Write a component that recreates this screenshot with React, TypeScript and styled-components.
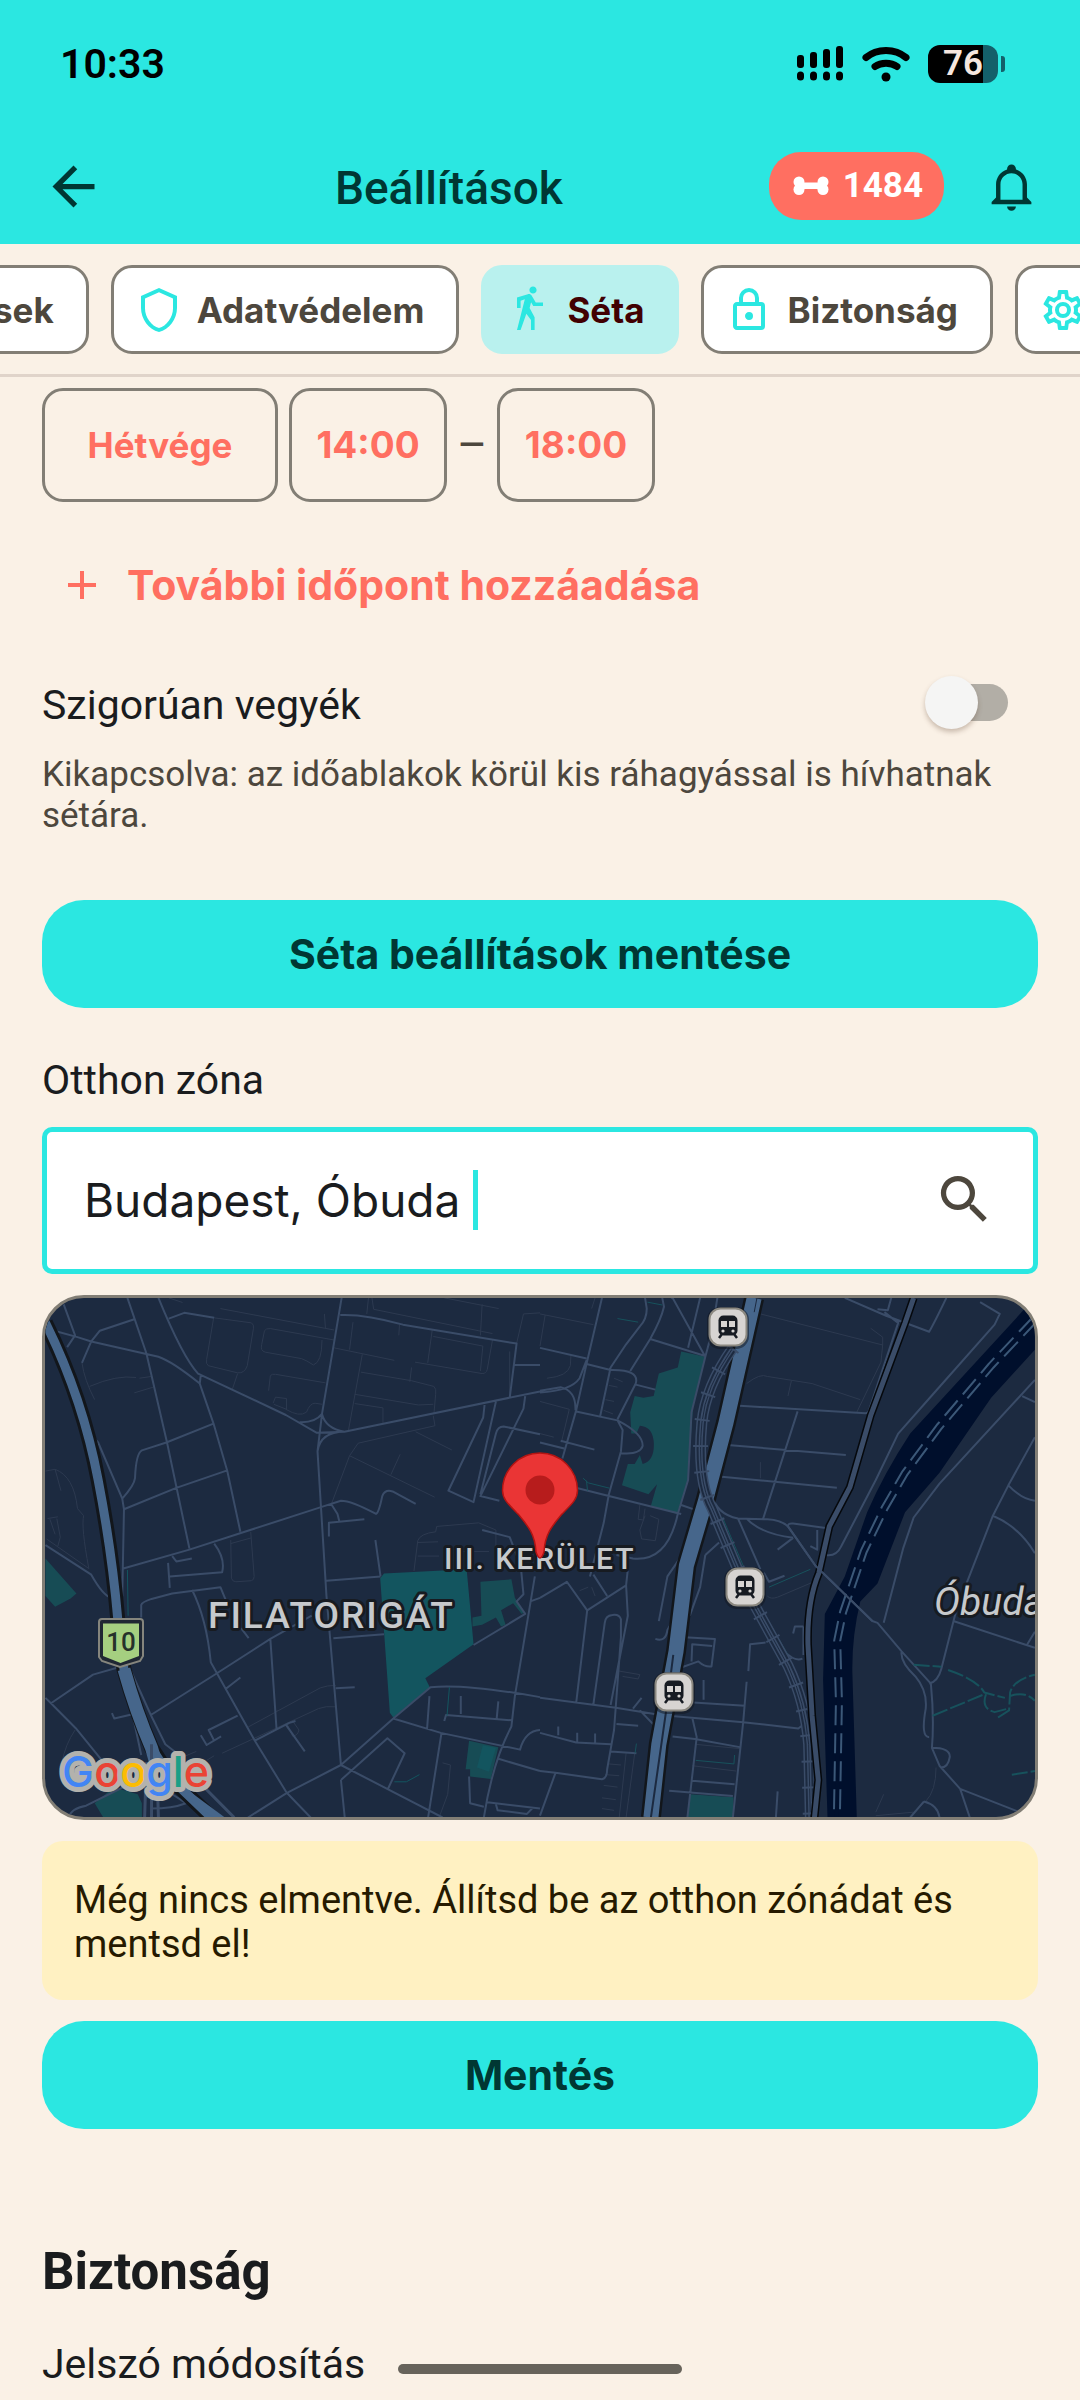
import React, { useLayoutEffect, useRef, useState } from "react";
import styled, { createGlobalStyle } from "styled-components";
import { MdAdd, MdArrowBack, MdSearch } from "react-icons/md";

const color = {
  aqua: "#2be7e1",
  aquaSoft: "#b9f1ee",
  aquaInk: "#003733",
  cream: "#faf1e6",
  coral: "#ff6f61",
  outline: "#827e75",
  ink: "#1a1c1e",
  muted: "#4d473d",
  line: "#e0d4ca",
};

const brand = `Inter, "Liberation Sans", sans-serif`;
const body = `Roboto, "Liberation Sans", sans-serif`;

const GlobalStyle = createGlobalStyle`
  *, *::before, *::after { box-sizing: border-box; }
  body { margin: 0; background: ${color.cream}; font-family: ${body}; color: ${color.ink}; }
  button, input { font: inherit; color: inherit; }
  h1, h2, p { margin: 0; }
  svg { display: block; flex: none; }
`;

const Screen = styled.div`
  display: flex;
  flex-direction: column;
  min-height: 100vh;
  overflow: hidden;
`;

const Header = styled.header`
  background: ${color.aqua};
`;

const StatusBar = styled.div`
  display: flex;
  align-items: center;
  justify-content: space-between;
  height: 128px;
  padding: 0 75px 0 60px;
  color: #000;
`;

const Clock = styled.time`
  font: 600 41px/48px ${body};
`;

const StatusIcons = styled.div`
  display: flex;
  align-items: center;
  gap: 18px;
`;

const Battery = styled.div`
  display: flex;
  align-items: center;
  gap: 3px;
`;

const BatteryCell = styled.div`
  width: 70px;
  height: 38px;
  border-radius: 12px;
  background: linear-gradient(to right, #000 79%, #14606a 79%);
  color: #f6e7df;
  font: 600 35px/38px ${body};
  text-align: center;
`;

const BatteryTip = styled.div`
  width: 4px;
  height: 16px;
  border-radius: 0 3px 3px 0;
  background: #14606a;
`;

const AppBar = styled.div`
  display: flex;
  align-items: center;
  height: 116px;
  padding: 0 42px;
  color: ${color.aquaInk};
`;

const IconButton = styled.button`
  display: grid;
  place-items: center;
  padding: 0;
  border: 0;
  background: none;
  cursor: pointer;
`;

const BackButton = styled(IconButton)`
  margin-right: 24px;
`;

const BellButton = styled(IconButton)`
  margin-left: 41px;
`;

const Title = styled.h1`
  flex: 1;
  padding-top: 4px;
  font: 500 46px/52px ${body};
  text-align: center;
`;

const Points = styled.button`
  display: flex;
  align-items: center;
  gap: 14px;
  height: 68px;
  padding: 0 21px 0 24px;
  border: 0;
  border-radius: 32px;
  background: ${color.coral};
  color: #fff;
  font: 700 35px/40px ${body};
`;

const Tabs = styled.nav`
  display: flex;
  gap: 22px;
  padding: 21px 42px 20px;
  overflow: hidden;
  border-bottom: 3px solid ${color.line};
`;

const Chip = styled.button<{ $active?: boolean }>`
  display: flex;
  flex: none;
  align-items: center;
  gap: 14px;
  height: 89px;
  padding: 0 32px 0 21px;
  border: 3px solid ${(p) => (p.$active ? color.aquaSoft : color.outline)};
  border-radius: 21px;
  background: ${(p) => (p.$active ? color.aquaSoft : "#fff")};
  color: ${(p) => (p.$active ? "#410002" : color.muted)};
  font: 700 35px/40px ${brand};
  cursor: pointer;
  svg { color: ${color.aqua}; }
`;

const Content = styled.main`
  display: flex;
  flex-direction: column;
  padding: 11px 42px 12px;
`;

const SlotRow = styled.div`
  display: flex;
  align-items: center;
`;

const SlotButton = styled.button<{ $wide?: boolean }>`
  width: ${(p) => (p.$wide ? 236 : 158)}px;
  height: 114px;
  margin-right: ${(p) => (p.$wide ? 11 : 0)}px;
  padding: 0;
  border: 3px solid ${color.outline};
  border-radius: 21px;
  background: none;
  color: ${color.coral};
  font: 700 ${(p) => (p.$wide ? 35 : 37)}px/44px ${brand};
`;

const Dash = styled.span`
  width: 50px;
  color: ${color.muted};
  font: 400 46px/44px ${body};
  text-align: center;
`;

const AddSlot = styled.button`
  display: flex;
  align-items: center;
  align-self: flex-start;
  gap: 21px;
  height: 64px;
  margin: 51px 0 59px;
  padding: 0 16px;
  border: 0;
  background: none;
  color: ${color.coral};
  font: 700 41px/46px ${brand};
`;

const SwitchRow = styled.label`
  display: flex;
  align-items: flex-end;
  justify-content: space-between;
  height: 53px;
  margin-bottom: 25px;
  padding-right: 30px;
  font: 400 41px/47px ${body};
`;

const Switch = styled.input`
  appearance: none;
  display: flex;
  align-items: center;
  width: 83px;
  height: 53px;
  margin: 0;

  &::before {
    content: "";
    z-index: 1;
    flex: none;
    width: 53px;
    height: 53px;
    border-radius: 50%;
    background: #f5f5f4;
    box-shadow: 0 3px 5px rgba(90, 60, 40, 0.3);
  }
  &::after {
    content: "";
    flex: none;
    width: 77px;
    height: 37px;
    margin-left: -47px;
    border-radius: 19px;
    background: #b2aea6;
  }
  &:checked::before { margin-left: 30px; }
  &:checked::after { margin-left: -77px; background: ${color.aqua}; }
`;

const Hint = styled.p`
  margin-bottom: 64px;
  color: ${color.muted};
  font: 400 35px/41px ${body};
`;

const PrimaryButton = styled.button`
  height: 108px;
  border: 0;
  border-radius: 42px;
  background: ${color.aqua};
  color: ${color.aquaInk};
  font: 700 41px/46px ${brand};
  cursor: pointer;
`;

const FieldLabel = styled.label`
  margin: 49px 0 23px;
  font: 400 41px/47px ${body};
`;

const SearchField = styled.div`
  display: flex;
  align-items: center;
  height: 147px;
  padding: 0 37px 2px;
  border: 5px solid ${color.aqua};
  border-radius: 10px;
  background: #fff;
`;

const SearchInput = styled.input`
  field-sizing: content;
  min-width: 20px;
  padding: 0;
  border: 0;
  outline: 0;
  background: none;
  white-space: pre;
  font: 400 46px/52px ${brand};
`;

const Caret = styled.span`
  width: 5px;
  height: 60px;
  margin-right: auto;
  background: ${color.aqua};
`;

const SearchButton = styled(IconButton)`
  color: ${color.muted};
`;

const MapCard = styled.div`
  height: 525px;
  margin: 21px 0;
  overflow: hidden;
  border: 3px solid ${color.outline};
  border-radius: 42px;
  background: #1c2a40;
  svg { width: 100%; height: 100%; }
`;

const Notice = styled.p`
  margin-bottom: 21px;
  padding: 37px 32px 34px;
  border-radius: 21px;
  background: #fff1c2;
  color: #261a00;
  font: 400 38px/44px ${body};
`;

const SectionTitle = styled.h2`
  margin: 114px 0 40px;
  font: 700 51px/58px ${body};
`;

const SettingName = styled.p`
  font: 400 41px/47px ${body};
`;

const HomeIndicator = styled.div`
  position: fixed;
  bottom: 26px;
  left: 50%;
  width: 284px;
  height: 10px;
  margin-left: -142px;
  border-radius: 5px;
  background: #67635b;
`;

const glyphs = {
  shield:
    "M21,11C21,16.5 17.16,21.74 12,23C6.84,21.74 3,16.5 3,11V5L12,1L21,5V11M12,21C15.75,20 19,15.54 19,11.22V6.3L12,3.18L5,6.3V11.22C5,15.54 8.25,20 12,21Z",
  walk:
    "M14.12,10H19V8.2H15.38L13.38,4.87C13.08,4.37 12.54,4.03 11.92,4.03C11.74,4.03 11.58,4.06 11.42,4.11L6,5.8V11H7.8V7.33L9.91,6.67L6,22H7.8L10.67,13.89L13,17V22H14.8V15.59L12.31,11.05L13.04,8.18M14,3.8C15,3.8 15.8,3 15.8,2C15.8,1 15,0.2 14,0.2C13,0.2 12.2,1 12.2,2C12.2,3 13,3.8 14,3.8Z",
  lock:
    "M12,17C10.89,17 10,16.1 10,15C10,13.89 10.89,13 12,13A2,2 0 0,1 14,15A2,2 0 0,1 12,17M18,20V10H6V20H18M18,8A2,2 0 0,1 20,10V20A2,2 0 0,1 18,22H6C4.89,22 4,21.1 4,20V10C4,8.89 4.89,8 6,8H7V6A5,5 0 0,1 12,1A5,5 0 0,1 17,6V8H18M12,3A3,3 0 0,0 9,6V8H15V6A3,3 0 0,0 12,3Z",
  cog:
    "M12,8A4,4 0 0,1 16,12A4,4 0 0,1 12,16A4,4 0 0,1 8,12A4,4 0 0,1 12,8M12,10A2,2 0 0,0 10,12A2,2 0 0,0 12,14A2,2 0 0,0 14,12A2,2 0 0,0 12,10M10,22C9.75,22 9.54,21.82 9.5,21.58L9.13,18.93C8.5,18.68 7.96,18.34 7.44,17.94L4.95,18.95C4.73,19.03 4.46,18.95 4.34,18.73L2.34,15.27C2.21,15.05 2.27,14.78 2.46,14.63L4.57,12.97L4.5,12L4.57,11L2.46,9.37C2.27,9.22 2.21,8.95 2.34,8.73L4.34,5.27C4.46,5.05 4.73,4.96 4.95,5.05L7.44,6.05C7.96,5.66 8.5,5.32 9.13,5.07L9.5,2.42C9.54,2.18 9.75,2 10,2H14C14.25,2 14.46,2.18 14.5,2.42L14.87,5.07C15.5,5.32 16.04,5.66 16.56,6.05L19.05,5.05C19.27,4.96 19.54,5.05 19.66,5.27L21.66,8.73C21.79,8.95 21.73,9.22 21.54,9.37L19.43,11L19.5,12L19.43,13L21.54,14.63C21.73,14.78 21.79,15.05 21.66,15.27L19.66,18.73C19.54,18.95 19.27,19.04 19.05,18.95L16.56,17.95C16.04,18.34 15.5,18.68 14.87,18.93L14.5,21.58C14.46,21.82 14.25,22 14,22H10M11.25,4L10.88,6.61C9.68,6.86 8.62,7.5 7.85,8.39L5.44,7.35L4.69,8.65L6.8,10.2C6.4,11.37 6.4,12.64 6.8,13.8L4.68,15.36L5.43,16.66L7.86,15.62C8.63,16.5 9.68,17.14 10.87,17.38L11.24,20H12.76L13.13,17.39C14.32,17.14 15.37,16.5 16.14,15.62L18.57,16.66L19.32,15.36L17.2,13.81C17.6,12.64 17.6,11.37 17.2,10.2L19.31,8.65L18.56,7.35L16.15,8.39C15.38,7.5 14.32,6.86 13.12,6.62L12.75,4H11.25Z",
  bell:
    "M10 21H14C14 22.1 13.1 23 12 23S10 22.1 10 21M21 19V20H3V19L5 17V11C5 7.9 7.03 5.17 10 4.29C10 4.19 10 4.1 10 4C10 2.9 10.9 2 12 2S14 2.9 14 4C14 4.1 14 4.19 14 4.29C16.97 5.17 19 7.9 19 11V17L21 19M17 11C17 8.24 14.76 6 12 6S7 8.24 7 11V18H17V11Z",
};

const Glyph = ({ name, size = 48 }: { name: keyof typeof glyphs; size?: number }) => (
  <svg width={size} height={size} viewBox="0 0 24 24" fill="currentColor" aria-hidden="true">
    <path d={glyphs[name]} />
  </svg>
);

const BoneIcon = () => (
  <svg width="36" height="20" viewBox="0 0 36 20" fill="currentColor" aria-hidden="true">
    <circle cx="6" cy="6" r="5.5" />
    <circle cx="6" cy="13.5" r="5.5" />
    <circle cx="30" cy="6" r="5.5" />
    <circle cx="30" cy="13.5" r="5.5" />
    <rect x="5" y="6.500" width="26" height="6.500" />
  </svg>
);

const SignalIcon = () => (
  <svg width="47" height="36" viewBox="0 0 47 36" aria-hidden="true">
    {[9, 6, 3, 0].map((top, i) => (
      <g key={top}>
        <rect x={i * 13} y={top} width="7" height={22 - top} rx="3" />
        <rect x={i * 13} y="25.500" width="7" height="9" rx="3.500" />
      </g>
    ))}
  </svg>
);

const WifiIcon = () => (
  <svg width="48" height="36" viewBox="0 0 48 36" fill="none" stroke="#000" strokeLinecap="round" aria-hidden="true">
    <path d="M4 11.500C15 2 33 2 44 11.500" strokeWidth="7" />
    <path d="M13 20.500C19 16 29 16 35 20.500" strokeWidth="7" />
    <circle cx="24" cy="31" r="4.500" fill="#000" stroke="none" />
  </svg>
);

const westStreets = `
M370 50L425 205L485 455L550 752M460 50Q530 215 575 262L830 378L920 428L1000 425L1568 312
M160 143L225 160L265 172L460 215Q500 228 580 290L620 402L660 535L698 705M580 290L583 266
M992 50L935 375L922 480L948 885L990 1358M935 375Q915 400 870 398M935 375Q945 415 1000 425M922 480Q930 425 1000 425
M358 808L550 755L932 636L990 618Q1020 618 1092 655Q1100 652 1110 605Q1118 585 1140 592L1207 627
M483 455L620 402M360 642L512 582L660 533M268 437L285 455L355 612L360 642L355 885L322 888Q300 885 265 825L132 742
M355 612Q390 575 392 555Q395 485 412 477L483 455M988 98Q1060 95 1170 125L1500 178L1480 330
M490 108L535 92L622 106M238 232L265 172L290 142L390 110M185 68L218 155L195 188
M148 1185L270 1105L350 1083M132 1170L148 1185L220 1255L300 1350M438 1218L622 1106L785 1005L905 940
M410 945L410 910Q412 902 440 893L500 878L640 860L655 895M558 868Q600 950 612 1070L740 1290L832 1435L902 1505
M720 1505L832 1437L990 1358L1142 1228L1250 1140Q1350 1130 1568 1168M990 1358L1285 1505M990 1400L1125 1283L1175 1325L1125 1428M990 1400L1001 1505
M1142 1228L1280 1268L1510 1315Q1525 1262 1568 1260M1282 1268L1243 1505M785 1005L803 1258M740 1290L840 1240L858 1235M948 842L1105 830M968 1003L1115 992
M1553 830L1495 1165L1485 1250Q1430 1350 1405 1505M1290 1235L1295 1218L1487 1233M1338 1165L1338 1215M1447 1180L1442 1230M1247 1165L1240 1258
M1568 890L1540 900M1375 1022L1525 935L1500 900L1520 880L1512 800L1480 720L1400 700
M1407 350L1403 385L1302 590L1375 622L1440 340M1525 325L1520 360L1395 605L1450 618M1568 432L1462 410Q1445 410 1440 430L1395 600
M1490 238L1568 238M1445 1340L1568 1375M1415 1462L1568 1480M1405 1475L1365 1465L1362 1390M1440 1468L1445 1485L1530 1495L1545 1480
M488 792L493 862M493 830L645 818Q655 780 622 738M500 773L512 788L557 780M955 718L955 680L1058 670M962 628L980 655L985 675
M325 1213L332 1228L385 1216L410 1330M378 1090L438 1218L480 1300L520 1330M380 1095L400 1180L430 1300M1090 728L1105 830M200 1505Q205 1480 250 1472L400 1400M975 1143L1030 1140
M655 1145L698 1113M583 1275L600 1302L642 1278M622 1290L606 1260L690 1220M830 1245L885 1320M700 975L722 1003M440 1480Q500 1480 540 1465L500 1440`;

const westLanes = `
M640 80L970 140M1065 95L1070 50M1080 50L1085 82L1430 150M1395 155L1400 68M1290 50L1448 80M622 106L730 120Q738 125 736 135L718 240Q710 262 690 260L605 240Q597 235 600 222L620 108M690 262L675 305
M935 168Q935 230 910 238Q890 225 875 220L770 202Q755 198 760 180L768 142Q772 135 785 136L970 168M970 190L1145 225M1025 118L1015 195
M780 310L785 268Q790 262 800 264L945 288M793 345L800 328L832 332L832 362L795 348M830 362Q870 385 890 370Q900 345 915 345L935 348M1052 208L1012 420M1048 258L1195 282L1260 298Q1268 305 1265 320L1260 375M1195 245L1190 285
M1030 320L1215 350L1258 348M1030 346L1112 358L1112 400M1205 230L1400 262Q1412 262 1415 250L1430 168M1255 140L1242 232M1395 255L1402 185L1258 158M1160 125L1158 155
M1258 380L1263 408L1040 457L1015 492L962 628M1207 425L1312 476M1015 492L1262 608M1162 488L1135 545M1480 200L1480 330M1500 178L1520 95L1568 92
M260 298Q340 265 395 273M405 275L440 270M238 232Q245 280 275 335M390 316L445 300M132 535L160 530Q215 550 225 640L243 660Q235 690 258 808L135 725M160 530L177 590M138 668L168 663M145 670L160 712M165 668L175 720L168 745
M670 728L672 835Q675 845 685 845L730 842Q738 840 738 830L728 705M670 738L730 722M490 50L530 63M942 95L945 135M1202 815L1213 730Q1220 710 1265 705L1268 690L1390 680L1440 700M1213 735L1272 733M1213 773L1275 773
M720 1252L930 1142Q950 1135 975 1135M806 1205L800 1210M645 1325L925 1200Q945 1192 975 1195M836 1248L850 1278Q865 1275 868 1260L850 1235M1285 1352L1308 1358L1300 1440L1275 1505M520 1340L570 1320M600 1345L622 1332M218 1260Q190 1300 180 1350M1440 790L1440 700M1340 760L1420 760`;

const eastStreets = `
M180 50L135 235L105 365L65 500M305 50L310 80Q310 110 290 130L250 180L205 245L175 380M355 50L360 75Q352 110 320 165L262 255M480 213L320 165M465 50L430 190
M0 310L60 300Q105 310 103 365M0 315Q90 310 115 275L135 225M0 190L135 220M105 368L225 393L240 420L235 480L200 600L185 680L145 830M0 455L70 472M135 235L205 252Q290 250 278 290L225 390
M225 393Q300 430 298 465Q290 490 235 485M110 583L200 605L410 655M278 293L335 307M385 50L480 215L440 370L430 560L400 655Q370 790 270 780L222 770M480 215Q500 150 515 50M385 50L380 50
M580 352L945 373Q955 372 957 360L1040 120L1000 90M748 368L648 668M545 462L888 490M520 550L862 582M545 440L500 600Q510 655 575 668L660 670Q700 672 720 690M720 690Q720 680 735 682L835 695
M720 690L800 800L965 955L980 960L1050 1040L1135 1130Q1145 1230 1138 1310L1160 1360L1220 1425L1385 1487M1050 1040Q1045 1070 1090 1110Q1125 1150 1120 1200Q1105 1280 1130 1280
M885 50L1005 100L1130 145Q1145 120 1180 50M980 82L1010 85L1020 50M1278 62L1335 95L1320 125L1150 310L1040 430L975 560L875 745Q860 775 830 770M1437 280L1160 570L1085 665L1055 750L998 960
M1400 325L1437 342M1437 440L1360 575L1315 660L1210 920L1165 1090Q1155 1125 1130 1130M1360 575Q1400 615 1437 618M1315 660Q1390 690 1437 765M1200 955L1437 1030M1415 1020L1437 985
M0 1170L220 1198L350 1218L590 1238L750 1256L765 1245M0 1268L105 1295L205 1300M600 1125L590 1238L560 1505M442 1225L455 1280L428 1505M0 1375L45 1380L180 1398Q195 1395 195 1370L215 1260L235 1000L235 950Q230 935 210 938Q190 940 188 960L155 1188M105 1185L137 925L78 845L0 890M137 925L250 855L255 940L205 1190
M250 855L255 810M155 825L195 885M480 770L520 735M345 955L370 830L420 760M480 770L465 860L435 940M335 1005Q365 1015 370 980L420 895M605 1095L610 1020L655 1015M420 1000L508 1005L498 1082Q480 1085 460 1068L410 1085M440 1068L442 1020L500 1025M445 1183L595 1192M385 1278L450 1285L580 1308M442 1402L565 1412M375 1430L560 1445M60 450L158 475M222 1243L285 1248M0 1500L45 1380M270 1200L295 1170M290 1205L340 1255M475 1120L475 1175M690 1432L685 1505
M1138 1310Q1190 1310 1190 1335Q1185 1365 1165 1365M1220 1425L1248 1505M1115 1460L1075 1505M1115 1460Q1155 1470 1160 1505M600 668Q640 710 735 722M735 722L690 755M575 668L640 810M650 820L665 845L710 828M765 970L740 970L735 990M805 700L805 755L785 745M765 1050L765 970M710 1040Q740 1070 762 1060M205 1320L280 1325M53 1250L53 1275M108 1268L108 1295M160 1270L160 1295M570 190L590 230M410 630L455 645`;

const eastLanes = `
M0 95L155 125M15 98L0 185M90 210L88 240Q80 270 20 275M0 340L85 362L62 455M640 95L995 182L990 230L920 370M600 290Q640 260 660 270L790 290L930 335M730 282L720 325M960 135L995 160L995 182M215 275L240 285M200 295L225 300M190 335L215 340M185 365L212 375
M290 630L285 670L300 672L305 640M320 660L345 670L335 730L295 725L290 700L305 660M640 510L640 555M230 1095L290 1105L285 1117L240 1110M200 1355L235 1358M190 1385L230 1388M185 1415L225 1420M180 1450L220 1455M180 1480L215 1485M250 1325L230 1505M275 1325L250 1505
M450 1300L580 1312M442 1360L570 1375M1150 1365Q1150 1430 1120 1460L1085 1490L975 1500M998 1440L975 1490M660 885Q670 895 690 888L795 845M115 870L140 860M150 860L160 885M150 80L160 50M0 430L40 440`;

const Station = ({ x, y }: { x: number; y: number }) => (
  <g transform={`translate(${x} ${y})`}>
    <rect x="-21" y="-20" width="42" height="42" rx="13" fill="#11161d" opacity=".5" />
    <rect x="-18.500" y="-18.500" width="37" height="37" rx="11" fill="#d7d4d2" stroke="#8b8880" strokeWidth="2" />
    <rect x="-9.500" y="-11.500" width="19" height="20" rx="5" fill="#171b22" />
    <path d="M-7 -6h6v6h-6zM1 -6h6v6h-6z" fill="#d7d4d2" />
    <circle cx="-5" cy="4" r="1.600" fill="#d7d4d2" />
    <circle cx="5" cy="4" r="1.600" fill="#d7d4d2" />
    <path d="M-6 7L-9 11M6 7L9 11" stroke="#171b22" strokeWidth="2.500" />
  </g>
);

const MapLabel = styled.text<{ $size: number; $italic?: boolean }>`
  font: ${(p) => (p.$italic ? "italic 400" : "500")} ${(p) => p.$size}px ${body};
  letter-spacing: ${(p) => (p.$italic ? 0 : 2)}px;
  fill: #c6c9cc;
  stroke: #171b21;
  stroke-width: 6px;
  stroke-linejoin: round;
  paint-order: stroke;
`;

const LogoText = styled.text`
  font: 500 43px ${brand};
`;

const logoLetters: [string, string][] = [
  ["G", "#4285f4"],
  ["o", "#ea4335"],
  ["o", "#fbbc05"],
  ["g", "#4285f4"],
  ["l", "#1a9e86"],
  ["e", "#ea4335"],
];

const west = "translate(0 1280) scale(.34439 .35714)";
const east = "translate(540 1280) scale(.34439 .35714)";
const rail = "M560 190Q480 300 470 400Q455 560 500 640L600 870L720 1080Q770 1180 780 1300L785 1505";
const expressway = "M622 50L540 400L480 620L425 800L395 1040L345 1300L322 1505";
const mainRoad = "M1085 50L1060 120L960 380L900 580L840 690L810 820Q775 900 778 1020L790 1220L808 1400L797 1505";
const ferry = "M1437 110L1310 240L1160 410L1060 540L1000 640L940 760L880 930L863 1010L868 1180L862 1505";
const motorway = "M132 120Q240 330 285 560Q325 760 342 950L360 1090Q395 1210 440 1310L500 1400L630 1520";

const ZoneMap = () => (
  <svg viewBox="45 1298 990 519" preserveAspectRatio="xMidYMid slice" role="img" aria-label="Otthon zóna térképe">
    <style>{`.map-lines path { vector-effect: non-scaling-stroke; fill: none; stroke-linejoin: round; }`}</style>
    <g transform={west}>
      <path fill="#13555f" d="M1115 822L1355 810L1375 1020L1235 1115L1248 1140L1142 1225L1132 1212L1104 835Z" />
      <path fill="#174c55" d="M1395 845L1485 838L1495 890L1522 930L1515 935L1490 905L1455 925L1468 965L1455 970L1440 945L1400 965L1372 970L1372 945L1398 940ZM132 780L222 878L205 892L160 915L132 885ZM1362 1290L1447 1308L1425 1397L1365 1390L1365 1370L1352 1370ZM275 1465L330 1420L400 1440L412 1465L412 1505L300 1505Z" />
      <path fill="#13555f" d="M1402 1303L1440 1310L1420 1377L1385 1365Z" />
    </g>
    <g transform={east}>
      <path fill="#174c55" d="M410 200L480 215L445 345L435 480L430 560L398 655L322 632L340 572L315 600L238 575L255 515L275 515L290 490L298 515Q335 505 330 450Q325 410 290 408L280 430L265 430L262 370L275 325L300 330L330 325L345 262L400 245ZM435 1440L562 1448L560 1505L428 1505Z" />
      <path fill="#000f2c" d="M1410 78L1437 100L1437 195L1310 330L1160 540L1060 650L980 850L930 900Q905 1000 907 1100L920 1510L835 1510L822 1120L827 935L885 830L950 650Q1000 540 1075 430Z" />
    </g>
    <g className="map-lines">
      <g transform={west} stroke="#3a4c68">
        <path d={westLanes} stroke="#2d3a50" strokeWidth="1" />
        <path d={westStreets} strokeWidth="2" />
        <path d={motorway} stroke="#12161b" strokeWidth="15" />
        <path d={motorway} stroke="#46668b" strokeWidth="9" />
        <path d="M360 1090Q395 1210 440 1310L455 1360" stroke="#46668b" strokeWidth="13" />
        <path d="M440 1300L440 1505M425 1350L420 1505M455 1350L460 1505M500 1330L680 1505" strokeWidth="3" />
        <path d="M545 1440L650 1515" stroke="#46668b" strokeWidth="7" />
        <path d="M370 812L372 940M1305 1140L1298 1220M1145 1405L1180 1405L1218 1385" stroke="#13555f" strokeWidth="1" />
      </g>
      <g transform={east} stroke="#3a4c68">
        <path d={eastLanes} stroke="#2d3a50" strokeWidth="1" />
        <path d={eastStreets} strokeWidth="2" />
        <path d="M225 108L285 118M312 62L355 70M125 555L140 568L202 583M135 562L138 590M530 665L590 800M665 860L785 810M640 915L720 1050M452 1345L563 1355L565 1330M280 1298L276 1325" stroke="#17525c" strokeWidth="1" />
        <path d="M1085 1077L1165 1083M1185 1092Q1270 1120 1290 1155L1350 1170M1140 1220L1290 1160M1295 1160Q1280 1200 1320 1210L1360 1200M1330 1225L1362 1205L1365 1155Q1375 1120 1437 1105M1365 1165Q1410 1150 1437 1178M1370 1385L1437 1375" stroke="#17525c" strokeWidth="2" strokeDasharray="16 3" />
        <path d={expressway} stroke="#12161b" strokeWidth="20" />
        <path d={expressway} stroke="#46668b" strokeWidth="15" />
        <path d="M387 1050L365 1215L322 1505" stroke="#1c2a40" strokeWidth="2" />
        <path d="M630 50L622 90" stroke="#1c2a40" strokeWidth="1" />
        <path d={rail} strokeWidth="11" />
        <path d={rail} stroke="#1c2a40" strokeWidth="8" />
        <path d={rail} strokeWidth="4" />
        <path d={rail} stroke="#1c2a40" strokeWidth="1" />
        <path d={rail} strokeWidth="15" strokeDasharray="2 24" />
        <path d={mainRoad} stroke="#05080c" strokeWidth="8" />
        <path d={mainRoad} strokeWidth="5" />
        <path d={ferry} stroke="#3b5878" strokeWidth="8" strokeDasharray="20 8" />
        <path d={ferry} stroke="#000f2c" strokeWidth="4" />
        <path d="M720 690L800 800L965 955" strokeWidth="2" />
      </g>
    </g>

    <Station x={728} y={1327} />
    <Station x={745} y={1587} />
    <Station x={674} y={1692} />

    <path d="M99 1622Q99 1619 102 1619H140Q143 1619 143 1622V1656L140 1661L120 1667L102 1661L99 1657Z" fill="#1f2733" stroke="#85857d" strokeWidth="2" />
    <path d="M103 1623.500H139V1656L120.500 1663L103 1656Z" fill="#a5cf80" />
    <text x="121" y="1651" textAnchor="middle" fill="#26312b" fontFamily="Roboto, sans-serif" fontSize="26" fontWeight="500">10</text>

    <MapLabel $size={37} x="208" y="1628">FILATORIGÁT</MapLabel>
    <MapLabel $size={30} x="444" y="1569">III. KERÜLET</MapLabel>
    <MapLabel $size={39} $italic x="934" y="1615">Óbuda</MapLabel>

    <path d="M536 1552C535 1534 528 1526 518 1514C508 1504 502.500 1499 502.500 1490.500A37.500 37.500 0 0 1 577.500 1490.500C577.500 1499 572 1504 562 1514C552 1526 545 1534 544 1552Q540 1564 536 1552Z" fill="#ea3535" stroke="#b31412" strokeWidth="1.500" />
    <circle cx="540" cy="1490" r="14.500" fill="#b71c1c" />

    <LogoText x="62" y="1787" stroke="#b3b2ad" strokeWidth="10" strokeLinejoin="round" paintOrder="stroke">
      {logoLetters.map(([letter, fill], i) => (
        <tspan key={i} fill={fill}>{letter}</tspan>
      ))}
    </LogoText>
  </svg>
);

const tabs: { label: string; icon?: keyof typeof glyphs }[] = [
  { label: "Értesítések" },
  { label: "Adatvédelem", icon: "shield" },
  { label: "Séta", icon: "walk" },
  { label: "Biztonság", icon: "lock" },
];

export default function App() {
  const [active, setActive] = useState("Séta");
  const [strict, setStrict] = useState(false);
  const [zone, setZone] = useState("Budapest, Óbuda ");
  const tabsRef = useRef<HTMLElement>(null);

  // Bring the open tab near the middle, leaving the earlier tab in view beside it.
  useLayoutEffect(() => {
    const bar = tabsRef.current;
    const chip = bar?.querySelector<HTMLElement>("[aria-current]");
    if (bar && chip) {
      bar.scrollLeft = chip.offsetLeft + chip.offsetWidth / 2 - bar.clientWidth / 2 - 40;
    }
  }, []);

  return (
    <Screen>
      <GlobalStyle />
      <Header>
        <StatusBar>
          <Clock>10:33</Clock>
          <StatusIcons>
            <SignalIcon />
            <WifiIcon />
            <Battery>
              <BatteryCell>76</BatteryCell>
              <BatteryTip />
            </Battery>
          </StatusIcons>
        </StatusBar>
        <AppBar>
          <BackButton aria-label="Vissza"><MdArrowBack size={63} /></BackButton>
          <Title>Beállítások</Title>
          <Points><BoneIcon />1484</Points>
          <BellButton aria-label="Értesítések megnyitása"><Glyph name="bell" size={53} /></BellButton>
        </AppBar>
      </Header>

      <Tabs ref={tabsRef}>
        {tabs.map(({ label, icon }) => (
          <Chip
            key={label}
            $active={label === active}
            aria-current={label === active ? "page" : undefined}
            onClick={() => setActive(label)}
          >
            {icon && <Glyph name={icon} />}
            {label}
          </Chip>
        ))}
        <Chip aria-label="Egyéb"><Glyph name="cog" /></Chip>
      </Tabs>

      <Content>
        <SlotRow>
          <SlotButton $wide>Hétvége</SlotButton>
          <SlotButton>14:00</SlotButton>
          <Dash>–</Dash>
          <SlotButton>18:00</SlotButton>
        </SlotRow>
        <AddSlot><MdAdd size={48} />További időpont hozzáadása</AddSlot>

        <SwitchRow>
          Szigorúan vegyék
          <Switch type="checkbox" role="switch" checked={strict} onChange={(e) => setStrict(e.target.checked)} />
        </SwitchRow>
        <Hint>Kikapcsolva: az időablakok körül kis ráhagyással is hívhatnak sétára.</Hint>
        <PrimaryButton>Séta beállítások mentése</PrimaryButton>

        <FieldLabel htmlFor="zone">Otthon zóna</FieldLabel>
        <SearchField>
          <SearchInput id="zone" value={zone} onChange={(e) => setZone(e.target.value)} />
          <Caret />
          <SearchButton aria-label="Keresés"><MdSearch size={63} /></SearchButton>
        </SearchField>
        <MapCard><ZoneMap /></MapCard>
        <Notice>Még nincs elmentve. Állítsd be az otthon zónádat és mentsd el!</Notice>
        <PrimaryButton>Mentés</PrimaryButton>

        <SectionTitle>Biztonság</SectionTitle>
        <SettingName>Jelszó módosítás</SettingName>
      </Content>
      <HomeIndicator />
    </Screen>
  );
}
